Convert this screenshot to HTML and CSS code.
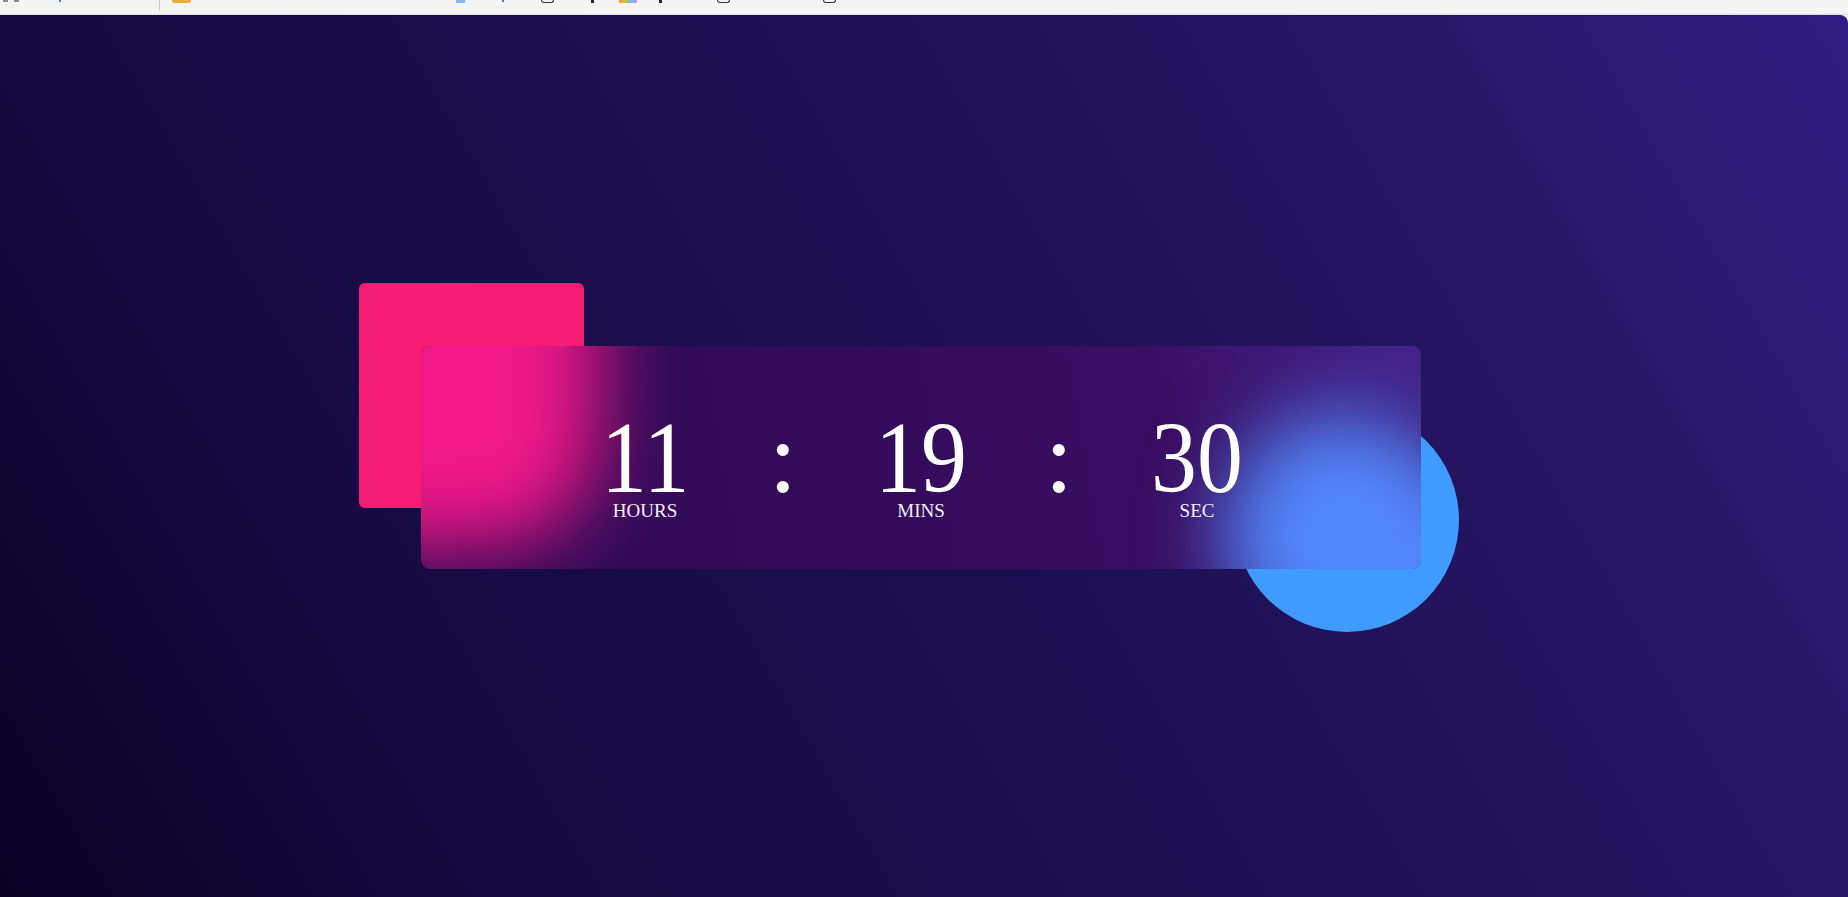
FILE: index.html
```html
<!DOCTYPE html>
<html lang="en">
<head>
<meta charset="utf-8">
<title>Countdown</title>
<link rel="stylesheet" href="styles.css">
</head>
<body>
<div class="chrome">
  <span class="mark mark-gray" style="margin-left:3px"></span>
  <span class="mark mark-gray" style="margin-left:6px"></span>
  <span class="mark mark-blue" style="margin-left:40px"></span>
  <span class="sepbar" style="margin-left:98px"></span>
  <span class="folder" style="margin-left:12px"></span>
  <span class="sq-blue" style="margin-left:265px"></span>
  <span class="mark mark-blue" style="margin-left:37px"></span>
  <span class="box" style="margin-left:37px"></span>
  <span class="mark mark-dark" style="margin-left:37px"></span>
  <span class="colors" style="margin-left:25px"></span>
  <span class="mark mark-dark" style="margin-left:22px"></span>
  <span class="box" style="margin-left:55px"></span>
  <span class="box" style="margin-left:93px"></span>
</div>
<main class="page">
  <div class="stage">
    <div class="shape square"></div>
    <div class="shape circle"></div>
    <div class="card">
      <div class="glow glow-pink"></div>
      <div class="glow glow-blue"></div>
      <div class="glow glow-blue-rect"></div>
      <div class="clock">
        <div class="unit"><span class="num">11</span><span class="label">HOURS</span></div>
        <div class="colon">:</div>
        <div class="unit"><span class="num">19</span><span class="label">MINS</span></div>
        <div class="colon">:</div>
        <div class="unit"><span class="num">30</span><span class="label">SEC</span></div>
      </div>
    </div>
  </div>
</main>
</body>
</html>
```

FILE: styles.css
```css
html, body {
  margin: 0;
  padding: 0;
}
body {
  width: 1848px;
  height: 897px;
  overflow: hidden;
  background: #f4f4f4;
  font-family: "Liberation Serif", "Times New Roman", serif;
}

/* browser chrome strip */
.chrome {
  height: 14px;
  background: #f4f4f4;
  border-bottom: 1px solid #dcdcdc;
  display: flex;
  align-items: flex-start;
}
.mark {
  display: block;
  width: 2px;
  height: 2px;
}
.mark-gray { background: #8a8a8a; width: 5px; }
.mark-blue { background: #3b7de0; }
.mark-dark { background: #222; width: 3px; height: 3px; }
.sepbar {
  display: block;
  width: 1px;
  height: 10px;
  background: #c9c9c9;
}
.folder {
  display: block;
  width: 19px;
  height: 3px;
  background: #e6b23a;
  border-radius: 0 0 2px 2px;
}
.sq-blue {
  display: block;
  width: 9px;
  height: 3px;
  background: #8ab4f8;
}
.box {
  display: block;
  width: 11px;
  height: 2px;
  border: 1px solid #333;
  border-top: none;
  border-radius: 0 0 3px 3px;
}
.colors {
  display: block;
  width: 18px;
  height: 3px;
  background: linear-gradient(90deg, #f28b82, #fbbc04, #81c995, #8ab4f8, #c58af9);
}

/* page */
.page {
  height: 882px;
  display: flex;
  justify-content: center;
  align-items: center;
  border-top-right-radius: 8px;
  background: linear-gradient(60deg,
    #0a0124 0%,
    #140a40 21.6%,
    #1c0f50 50%,
    #261664 78.4%,
    #301c80 100%);
}

.stage {
  position: relative;
  width: 1000px;
  height: 223px;
  margin-right: 6px;
  margin-top: 3px;
}

.shape {
  position: absolute;
}
.square {
  left: -62px;
  top: -63px;
  width: 225px;
  height: 225px;
  border-radius: 6px;
  background: #f51c74;
}
.circle {
  left: 814px;
  top: 62px;
  width: 224px;
  height: 224px;
  border-radius: 50%;
  background: #3f9bff;
}

.card {
  position: relative;
  width: 100%;
  height: 100%;
  box-sizing: border-box;
  border-radius: 9px;
  padding-top: 69px;
  display: flex;
  justify-content: center;
  align-items: flex-start;
  overflow: hidden;
  background:
    radial-gradient(ellipse 280px 170px at 100% 0%, rgba(72, 46, 160, 0.6), rgba(72, 46, 160, 0) 100%),
    linear-gradient(80deg, #2f0a55 0%, #340b5a 45%, #3a0d62 75%, #3a1268 100%);
}

.glow {
  position: absolute;
  filter: blur(40px);
}
.glow-pink {
  left: -140px;
  top: -140px;
  width: 318px;
  height: 340px;
  background: #f01888;
  border-radius: 0 0 110px 0;
}
.glow-blue {
  left: 800px;
  top: 68px;
  width: 240px;
  height: 240px;
  border-radius: 50%;
  background: #5387fc;
}
.glow-blue-rect {
  left: 910px;
  top: 160px;
  width: 220px;
  height: 160px;
  background: #5387fc;
}

.clock {
  position: relative;
  display: grid;
  grid-template-columns: repeat(5, 138px);
  justify-items: center;
  align-items: start;
  color: #ffffff;
}

.unit {
  display: flex;
  flex-direction: column;
  align-items: center;
}
.num, .colon {
  font-size: 102px;
  line-height: 0.84;
  display: block;
}
.num {
  transform: scaleX(0.9);
}
.label {
  display: block;
  font-size: 19px;
  line-height: 1;
  color: #f4f0f8;
}
```
